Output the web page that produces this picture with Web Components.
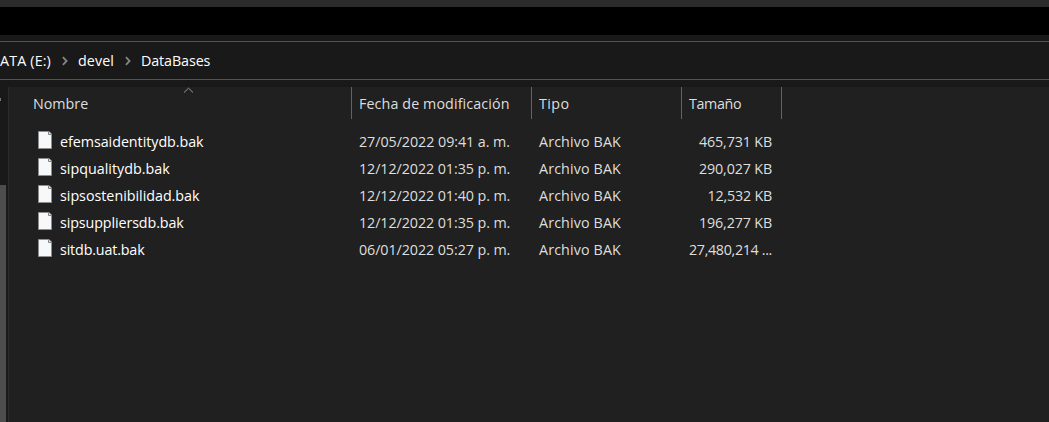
<!DOCTYPE html>
<html lang="es"><head><meta charset="utf-8"><title>DataBases</title>
<style>html,body{margin:0;height:100%;overflow:hidden;background:#191919}</style></head>
<body><file-explorer></file-explorer>
<script>
const define=(name,html,init)=>customElements.define(name,class extends HTMLElement{
  connectedCallback(){
    if(this.shadowRoot)return;
    this.attachShadow({mode:'open'}).innerHTML=html;
    if(init)init(this,this.shadowRoot);
  }
});
// A label whose tracking is adjusted so that it fills the width in "w".
define('fit-text',`<style>:host{display:inline-block;white-space:pre}span{display:inline-block}</style><span></span>`,(el,root)=>{
  const s=root.querySelector('span'),w=+el.getAttribute('w');
  s.textContent=el.getAttribute('text');
  const own=s.getBoundingClientRect().width;
  s.style.letterSpacing=((w-own)/s.textContent.length)+'px';
});
define('file-icon',`<style>:host{display:block;width:14px;height:18px}svg{display:block}</style>
<svg width="14" height="18" viewBox="0 0 14 18"><path d="M.5.5H11L13.5 3V17.5H.5Z" fill="#f7f8f9" stroke="#8e8e8e"/><path d="M10.5 .5V3.5H13.5" fill="#dedede" stroke="#858585"/></svg>`);
define('crumb-arrow',`<style>:host{display:block;width:6px;height:10px}svg{display:block}</style>
<svg width="6" height="10" viewBox="0 0 6 10"><path d="M.9 1.2L4.6 5L.9 8.8" fill="none" stroke="#858585" stroke-width="1.8"/></svg>`);
define('title-strip',`<style>:host{display:block;height:28px;border-top:7px solid #2b2b2b;background:#000}</style>`);
define('address-bar',`<style>:host{display:flex;align-items:center;box-sizing:border-box;height:39px;margin-top:6px;border:solid #535353;border-width:1px 0;color:#fff}
fit-text{line-height:20px;padding-top:1px}.a{margin:0 10px 0 11px}.b{margin:0 10px 0 11px}crumb-arrow{margin-top:-3px}</style>
<fit-text text="ATA (E:)" w="51"></fit-text><crumb-arrow class="a"></crumb-arrow><fit-text text="devel" w="36"></fit-text><crumb-arrow class="b"></crumb-arrow><fit-text text="DataBases" w="69.3"></fit-text>`);
define('nav-pane',`<style>:host{display:flex;flex-direction:column;width:8px;background:#191919}
.mark{width:1px;height:3px;margin-top:11px;background:#777}.thumb{width:6px;flex:1;margin-top:84px;background:#4d4d4d}</style><div class="mark"></div><div class="thumb"></div>`);
define('column-head',`<style>:host{display:block;box-sizing:border-box;height:32px;border-right:1px solid #636363;padding-top:7px;line-height:20px;color:#dedede;position:relative}
svg{display:none;position:absolute;left:174px;top:0}:host([sorted]) svg{display:block}</style><slot></slot>
<svg width="11" height="7" viewBox="0 0 11 7"><path d="M1 5.5L5.5 1.2L10 5.5" fill="none" stroke="#999"/></svg>`);
define('file-row',`<style>:host{display:grid;grid-template-columns:22px 299px 180px 150px 83px;height:27px;line-height:27px;color:#dedede}
file-icon{margin-top:3px}.n{color:#fff}.s{text-align:right}</style><file-icon></file-icon><div class="n"></div><div class="d"></div><div class="t"><fit-text text="Archivo BAK" w="82"></fit-text></div><div class="s"></div>`,(el,root)=>{
  for(const k of ['n','d','s']){
    const [text,w]=el.getAttribute(k).split('|'),t=document.createElement('fit-text');
    t.setAttribute('text',text);t.setAttribute('w',w);root.querySelector('.'+k).append(t);
  }
});
define('file-list',`<style>:host{display:block;flex:1;background:#202020;border-left:1px solid #2b2b2b}
.head{display:grid;grid-template-columns:343px 180px 150px 100px}.n{padding-left:24px}.o{padding-left:7px}.rows{padding:9px 0 0 29px}</style>
<div class="head"><column-head class="n" sorted><fit-text text="Nombre" w="55.2"></fit-text></column-head><column-head class="o"><fit-text text="Fecha de modificación" w="150.5"></fit-text></column-head><column-head class="o"><fit-text text="Tipo" w="30.5"></fit-text></column-head><column-head class="o"><fit-text text="Tamaño" w="52.2"></fit-text></column-head></div>
<div class="rows">
<file-row n="efemsaidentitydb.bak|143.6" d="27/05/2022 09:41 a. m.|151" s="465,731 KB|73"></file-row>
<file-row n="sipqualitydb.bak|109.7" d="12/12/2022 01:35 p. m.|151.3" s="290,027 KB|73"></file-row>
<file-row n="sipsostenibilidad.bak|139.5" d="12/12/2022 01:40 p. m.|151.3" s="12,532 KB|64.5"></file-row>
<file-row n="sipsuppliersdb.bak|123.7" d="12/12/2022 01:35 p. m.|151.3" s="196,277 KB|73"></file-row>
<file-row n="sitdb.uat.bak|84.5" d="06/01/2022 05:27 p. m.|151.3" s="27,480,214 ...|83"></file-row>
</div>`);
define('file-explorer',`<style>:host{display:flex;flex-direction:column;height:100vh;background:#191919;font:14.3px "Open Sans","Noto Sans",sans-serif}
.body{display:flex;flex:1;margin-top:7px}</style><title-strip></title-strip><address-bar></address-bar><div class="body"><nav-pane></nav-pane><file-list></file-list></div>`);
</script></body></html>
